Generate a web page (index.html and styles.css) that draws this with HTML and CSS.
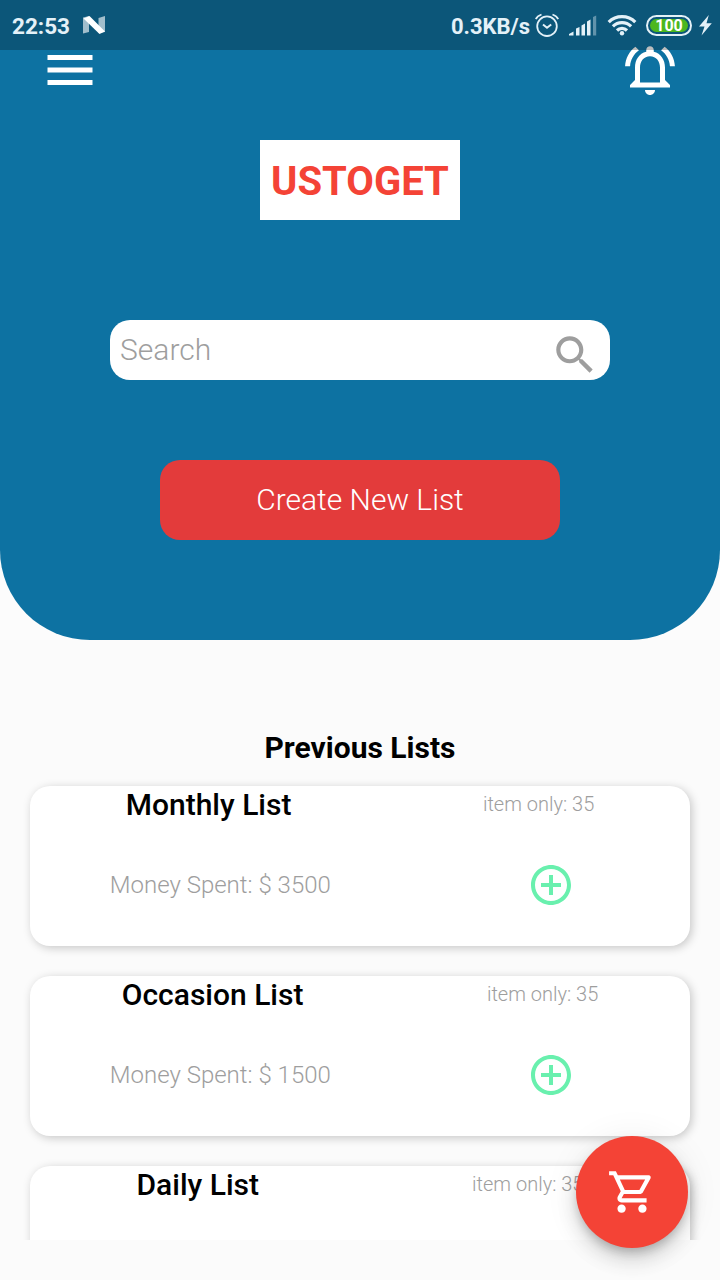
FILE: index.html
```html
<!DOCTYPE html>
<html lang="en">
<head>
<meta charset="utf-8">
<title>Ustoget</title>
<link rel="stylesheet" href="styles.css">
</head>
<body>
<div class="screen">
  <div class="status">
    <span class="clock">22:53</span>
    <svg class="n-icon" width="22" height="18" viewBox="0 0 22 18"><path d="M0 1.500L6 0v16l-6 1.500zM15.500 2L22 0v16l-6.500 1z" fill="#fff" opacity=".62"/><path d="M.5 2.500L6.500 0 22 15.500 16.500 18z" fill="#fff"/></svg>
    <span class="speed">0.3KB/s</span>
    <svg class="alarm" width="24" height="24" viewBox="0 0 24 24" fill="none" stroke="#e4f1f8" stroke-width="1.800"><circle cx="12" cy="13.200" r="9.800"/><path d="M8 11.500l4 3.200 4.200-3.200" stroke-width="2"/><path d="M.8 6.200Q2.200 3 6.500 1.500M23.200 6.200Q21.800 3 17.500 1.500"/></svg>
    <svg class="signal" width="28" height="21" viewBox="0 0 28 21" fill="#e4f1f8"><path d="M0 20.500V19l4.500-2.500v4zM7 13.500l3.500-1.500v8.500H7zM12.500 10.500l3.500-2v12h-3.500zM18 6.500l3.500-2v16H18z"/><path d="M24 2l3.200-1.500v20H24z" opacity=".4"/></svg>
    <svg class="wifi" width="30" height="22" viewBox="0 0 30 22" fill="none" stroke="#e4f1f8" stroke-width="3.200"><path d="M1.700 8.200A18.800 18.800 0 0 1 28.300 8.200M5.900 12.400A12.900 12.900 0 0 1 24.100 12.400M10 16.500A7.100 7.100 0 0 1 20 16.500"/><circle cx="15" cy="19.300" r="2.200" fill="#e4f1f8" stroke="none"/></svg>
    <span class="battery"><span class="charge">100</span></span>
    <svg class="bolt" width="13" height="21" viewBox="0 0 13 21"><path d="M9.800 0L0 11.500h5.500L2.500 20.500 12.800 8.200H7.500z" fill="#e4f1f8"/></svg>
  </div>
  <header class="header">
    <div class="topbar">
      <svg width="60" height="60" viewBox="0 0 24 24" fill="#fff"><path d="M3 18h18v-2H3v2zm0-5h18v-2H3v2zm0-7v2h18V6H3z"/></svg>
      <svg width="60" height="60" viewBox="0 0 24 24" fill="#fff"><path d="M12 22c1.100 0 2-.9 2-2h-4c0 1.100.9 2 2 2zm6-6v-5c0-3.070-1.630-5.640-4.500-6.320V4c0-.83-.67-1.500-1.500-1.500s-1.500.67-1.500 1.500v.68C7.640 5.360 6 7.920 6 11v5l-2 2v1h16v-1l-2-2zm-2 1H8v-6c0-2.480 1.510-4.500 4-4.500s4 2.020 4 4.500v6zM7.580 4.080L6.150 2.650C3.750 4.480 2.170 7.300 2.030 10.500h2c.15-2.650 1.510-4.970 3.550-6.420zm12.390 6.420h2c-.15-3.200-1.730-6.020-4.120-7.850l-1.420 1.430c2.020 1.450 3.390 3.770 3.540 6.420z"/></svg>
    </div>
    <div class="logo">USTOGET</div>
    <div class="search">
      <span>Search</span>
      <svg width="50" height="50" viewBox="0 0 24 24" fill="#9e9e9e"><path d="M15.500 14h-.79l-.28-.27C15.410 12.590 16 11.110 16 9.500 16 5.910 13.090 3 9.500 3S3 5.910 3 9.500 5.910 16 9.500 16c1.610 0 3.090-.59 4.230-1.570l.27.28v.79l5 4.990L20.490 19l-4.990-5zm-6 0C7.010 14 5 11.990 5 9.500S7.010 5 9.500 5 14 7.010 14 9.500 11.990 14 9.500 14z"/></svg>
    </div>
    <div class="create">Create New List</div>
  </header>
  <h1 class="heading">Previous Lists</h1>
  <main class="lists">
    <section class="card">
      <div class="row title-row"><h2>Monthly List</h2><span class="count">item only: 35</span></div>
      <div class="row"><span class="spent">Money Spent: $ 3500</span><span class="add"><svg width="48" height="48" viewBox="0 0 24 24" fill="#69f0ae"><path d="M13 7h-2v4H7v2h4v4h2v-4h4v-2h-4V7zm-1-5C6.480 2 2 6.480 2 12s4.480 10 10 10 10-4.480 10-10S17.520 2 12 2zm0 18c-4.410 0-8-3.590-8-8s3.590-8 8-8 8 3.590 8 8-3.590 8-8 8z"/></svg></span></div>
    </section>
    <section class="card">
      <div class="row title-row"><h2>Occasion List</h2><span class="count">item only: 35</span></div>
      <div class="row"><span class="spent">Money Spent: $ 1500</span><span class="add"><svg width="48" height="48" viewBox="0 0 24 24" fill="#69f0ae"><path d="M13 7h-2v4H7v2h4v4h2v-4h4v-2h-4V7zm-1-5C6.480 2 2 6.480 2 12s4.480 10 10 10 10-4.480 10-10S17.520 2 12 2zm0 18c-4.410 0-8-3.590-8-8s3.590-8 8-8 8 3.590 8 8-3.590 8-8 8z"/></svg></span></div>
    </section>
    <section class="card">
      <div class="row title-row"><h2>Daily List</h2><span class="count">item only: 35</span></div>
    </section>
  </main>
  <div class="fab">
    <svg width="50" height="50" viewBox="0 0 24 24" fill="#fff"><path d="M15.550 13c.75 0 1.410-.41 1.750-1.030l3.580-6.490c.37-.66-.11-1.480-.87-1.480H5.210l-.94-2H1v2h2l3.600 7.590-1.350 2.440C4.520 15.370 5.480 17 7 17h12v-2H7l1.100-2h7.450zM6.160 6h12.150l-2.760 5H8.530L6.160 6zM7 18c-1.100 0-1.990.9-1.990 2S5.900 22 7 22s2-.9 2-2-.9-2-2-2zm10 0c-1.100 0-1.990.9-1.990 2s.89 2 1.990 2 2-.9 2-2-.9-2-2-2z"/></svg>
  </div>
</div>
</body>
</html>
```
FILE: styles.css
```css
* { box-sizing: border-box; }
body { margin: 0; background: #fafafa; font-family: Roboto, sans-serif; }
svg { display: block; flex: none; }
.screen { position: relative; width: 720px; height: 1280px; overflow: hidden; background: linear-gradient(#fcfcfc 640px, #fbfbfb 640px); }

/* The translucent system bar lies over the app header. */
.status { position: absolute; inset: 0 0 auto; z-index: 2; height: 50px; display: flex; align-items: center; padding-left: 12px; background: rgba(10, 10, 10, .27); color: #e4f1f8; font-size: 22.500px; font-weight: 700; white-space: nowrap; }
.clock { width: 71px; padding-top: 2px; }
.speed { margin-left: auto; padding-top: 3px; font-size: 22px; }
.alarm { margin-left: 5px; }
.signal { margin-left: 10px; }
.wifi { margin-left: 10px; }
.battery { width: 46px; height: 21px; margin-left: 9px; padding: 2px; border: 2px solid #e4f1f8; border-radius: 11px; }
.charge { display: block; height: 13px; border-radius: 7px; background: #4cb71f; color: #fff; font-size: 16px; line-height: 13px; text-align: center; }
.bolt { margin: 0 8px 0 7px; }

.header { height: 640px; display: flex; flex-direction: column; align-items: center; padding-top: 40px; background: #0d72a2; border-radius: 0 0 90px 90px; }
.topbar { width: 100%; display: flex; justify-content: space-between; padding: 0 40px; }
.logo { width: 200px; height: 80px; margin-top: 40px; background: #fff; color: #f44336; font-size: 40px; font-weight: 700; line-height: 84px; text-align: center; }
.search { width: 500px; height: 60px; margin-top: 100px; padding: 0 10px; display: flex; justify-content: space-between; border-radius: 20px; background: #fff; color: #9e9e9e; font-size: 30px; font-weight: 300; line-height: 60px; }
.search svg { margin-top: 10px; }
.create { width: 400px; height: 80px; margin-top: 80px; border-radius: 20px; background: #e33b3b; color: #fff; font-size: 30px; font-weight: 300; line-height: 80px; text-align: center; }

.heading { margin: 90px 0 0; height: 36px; font-size: 30px; font-weight: 700; line-height: 36px; text-align: center; color: #000; }
.lists { height: 474px; padding: 20px 30px 0; display: flex; flex-direction: column; gap: 30px; overflow: hidden; }
.card { flex: none; height: 160px; border-radius: 20px; background: #fff; box-shadow: 2px 2px 10px rgba(0, 0, 0, .21); }
.row { display: flex; justify-content: space-around; align-items: center; height: 122px; }
.title-row { height: 38px; }
h2 { margin: 0; font-size: 30px; font-weight: 500; line-height: 38px; color: #000; }
.count { padding-bottom: 2px; font-size: 20px; font-weight: 300; color: #9e9e9e; }
.spent { font-size: 24px; font-weight: 300; color: #9e9e9e; }
.add { width: 120px; display: flex; justify-content: center; padding-left: 1px; }
.fab { position: absolute; left: 576px; top: 1136px; width: 112px; height: 112px; display: flex; align-items: center; justify-content: center; border-radius: 50%; background: #f44336; box-shadow: 0 6px 10px -2px rgba(0, 0, 0, .2), 0 12px 20px rgba(0, 0, 0, .14), 0 2px 36px rgba(0, 0, 0, .07); }
```
